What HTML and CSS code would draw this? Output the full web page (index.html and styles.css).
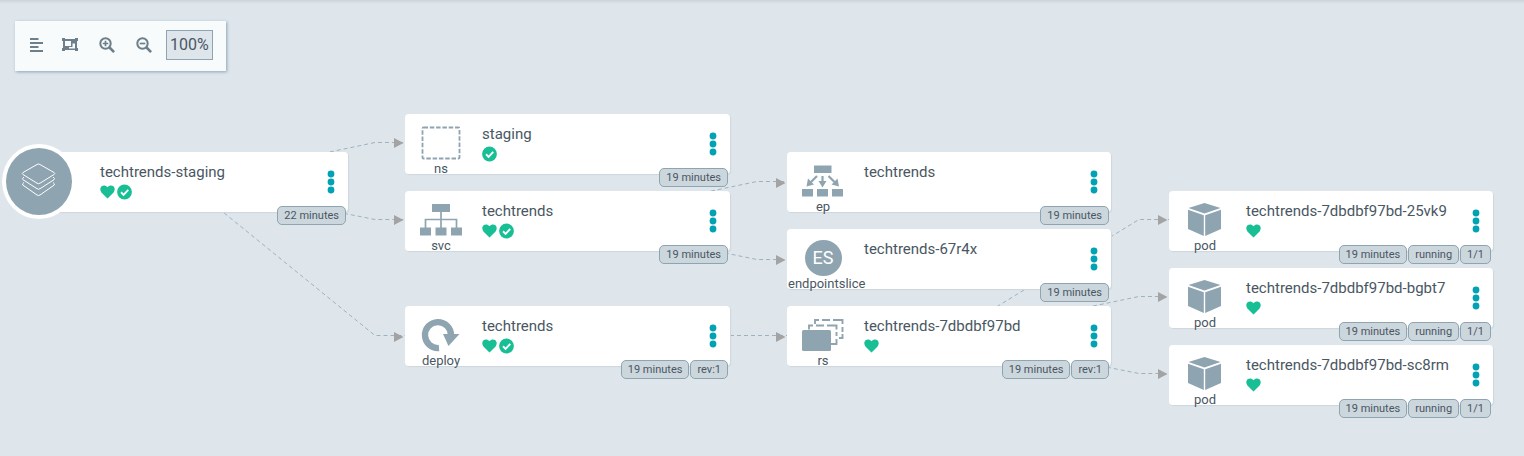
FILE: index.html
```html
<!DOCTYPE html>
<html lang="en">
<head>
<meta charset="utf-8">
<title>techtrends-staging</title>
<link rel="stylesheet" href="styles.css">
</head>
<body>
<svg class="defs" aria-hidden="true">
  <symbol id="heart" viewBox="0 0 16 16"><path d="M8 15 1.500 8.400C-.3 6.200 0 3.200 2 1.700c1.900-1.300 4.300-.8 6 1.100 1.700-1.900 4.100-2.400 6-1.100 2 1.500 2.300 4.500.5 6.700z"/></symbol>
  <symbol id="check" viewBox="0 0 16 16"><circle cx="8" cy="8" r="7.900"/><path class="tick" d="M4.300 8.300 7 11l5-5.200"/></symbol>
  <symbol id="dots" viewBox="0 0 8 24"><circle cx="4" cy="4" r="3.400"/><circle cx="4" cy="12" r="3.400"/><circle cx="4" cy="20" r="3.400"/></symbol>
  <symbol id="ns" viewBox="0 0 42 36"><rect class="line" x="2.500" y="2.500" width="37" height="31" rx="1" stroke-width="1.800" stroke-dasharray="4.500 1.800"/></symbol>
  <symbol id="svc" viewBox="0 0 42 36"><path d="M12 2h18v8H12zM0 25.500h11v8H0zM15.500 25.500h11v8h-11zM31 25.500h11v8H31z"/><path class="line" d="M21 10v16M5.500 26v-8.500h31V26" stroke-width="1.700"/></symbol>
  <symbol id="ep" viewBox="0 0 42 36"><path d="M12 2.500h17.500V10H12zM0 26h11v7.500H0zM15 26h11v7.500H15zM30 26h11v7.500H30zM4.500 23.500l1.500-8 6 6zM37 23.500l-1.500-8-6 6zM20.500 24.500 16.500 18h8z"/><path class="line" d="m15 13-6 6M26.500 13l6 6M20.500 13V20" stroke-width="2.200"/></symbol>
  <symbol id="deploy" viewBox="0 0 42 36"><path class="line" d="M19 31A13 13 0 1 1 31 18" stroke-width="6.300"/><path d="M23 17h16.500L28.500 29z"/></symbol>
  <symbol id="rs" viewBox="0 0 42 36"><rect y="13" width="29" height="21" rx="1.500"/><path class="line" d="M7 12.500V8.500h4M14 8.500h8M25 8.500h9.500v4M34.500 15v4M34.500 22v5H29M13 7V3h4M20 3h8M31 3h9.500v4M40.500 10v5M40.500 17v4H37" stroke-width="1.900"/></symbol>
  <symbol id="pod" viewBox="0 0 42 36"><path d="M20.500 1 36.500 6 20.500 11.500 4.500 6zM4 7.800l15.800 5.400V34L4 27zM37 7.800l-15.800 5.400V34L37 27z"/></symbol>
</svg>

<main class="tree">
  <svg class="edges" aria-hidden="true">
    <g class="wires">
      <path d="M186 182 375 142.500H405M186 182 375 219.500H405M186 182 375 335.500H405"/>
      <path d="M567 221 757 181.500H787M567 221 757 259.500H787M730 335.500H787"/>
      <path d="M949 336 1139 219.500H1169M949 336 1139 296.500H1169M949 336 1139 373.500H1169"/>
    </g>
    <path class="heads" d="M394 138v10l9.500-5zM394 215v10l9.500-5zM394 332v10l9.500-5zM776 178v10l9.500-5zM776 255v10l9.500-5zM776 332v10l9.500-5zM1158 215v10l9.500-5zM1158 292v10l9.500-5zM1158 369v10l9.500-5z"/>
  </svg>

  <article class="node root">
    <div class="disc"><svg viewBox="0 0 36 36"><path d="M16 2.500q1.500-1 3 0L33 10.500q1.600 1 0 2L19 21.200q-1.500 1-3 0L2 12.500q-1.600-1 0-2zM3 15q-2.600 1.700-1 2.700L16 26.700q1.500 1 3 0L33 17.700q1.600-1-1-2.700M3 20.500q-2.600 1.700-1 2.700L16 33q1.500 1 3 0L33 23.200q1.600-1-1-2.700"/></svg></div>
    <div class="info"><h2>techtrends-staging</h2><div class="status"><svg><use href="#heart"/></svg><svg><use href="#check"/></svg></div></div>
    <button class="menu" aria-label="Actions"><svg><use href="#dots"/></svg></button>
    <div class="tags"><span>22 minutes</span></div>
  </article>

  <article class="node col1 row0">
    <div class="kind"><svg><use href="#ns"/></svg><span>ns</span></div>
    <div class="info"><h2>staging</h2><div class="status"><svg><use href="#check"/></svg></div></div>
    <button class="menu" aria-label="Actions"><svg><use href="#dots"/></svg></button>
    <div class="tags"><span>19 minutes</span></div>
  </article>
  <article class="node col1 row2">
    <div class="kind"><svg><use href="#svc"/></svg><span>svc</span></div>
    <div class="info"><h2>techtrends</h2><div class="status"><svg><use href="#heart"/></svg><svg><use href="#check"/></svg></div></div>
    <button class="menu" aria-label="Actions"><svg><use href="#dots"/></svg></button>
    <div class="tags"><span>19 minutes</span></div>
  </article>
  <article class="node col1 row5">
    <div class="kind"><svg><use href="#deploy"/></svg><span>deploy</span></div>
    <div class="info"><h2>techtrends</h2><div class="status"><svg><use href="#heart"/></svg><svg><use href="#check"/></svg></div></div>
    <button class="menu" aria-label="Actions"><svg><use href="#dots"/></svg></button>
    <div class="tags"><span>19 minutes</span><span>rev:1</span></div>
  </article>

  <article class="node col2 row1">
    <div class="kind"><svg><use href="#ep"/></svg><span>ep</span></div>
    <div class="info"><h2>techtrends</h2></div>
    <button class="menu" aria-label="Actions"><svg><use href="#dots"/></svg></button>
    <div class="tags"><span>19 minutes</span></div>
  </article>
  <article class="node col2 row3">
    <div class="kind"><b class="initials">ES</b><span>endpointslice</span></div>
    <div class="info"><h2>techtrends-67r4x</h2></div>
    <button class="menu" aria-label="Actions"><svg><use href="#dots"/></svg></button>
    <div class="tags"><span>19 minutes</span></div>
  </article>
  <article class="node col2 row5">
    <div class="kind"><svg><use href="#rs"/></svg><span>rs</span></div>
    <div class="info"><h2>techtrends-7dbdbf97bd</h2><div class="status"><svg><use href="#heart"/></svg></div></div>
    <button class="menu" aria-label="Actions"><svg><use href="#dots"/></svg></button>
    <div class="tags"><span>19 minutes</span><span>rev:1</span></div>
  </article>

  <article class="node col3 row2">
    <div class="kind"><svg><use href="#pod"/></svg><span>pod</span></div>
    <div class="info"><h2>techtrends-7dbdbf97bd-25vk9</h2><div class="status"><svg><use href="#heart"/></svg></div></div>
    <button class="menu" aria-label="Actions"><svg><use href="#dots"/></svg></button>
    <div class="tags"><span>19 minutes</span><span>running</span><span>1/1</span></div>
  </article>
  <article class="node col3 row4">
    <div class="kind"><svg><use href="#pod"/></svg><span>pod</span></div>
    <div class="info"><h2>techtrends-7dbdbf97bd-bgbt7</h2><div class="status"><svg><use href="#heart"/></svg></div></div>
    <button class="menu" aria-label="Actions"><svg><use href="#dots"/></svg></button>
    <div class="tags"><span>19 minutes</span><span>running</span><span>1/1</span></div>
  </article>
  <article class="node col3 row6">
    <div class="kind"><svg><use href="#pod"/></svg><span>pod</span></div>
    <div class="info"><h2>techtrends-7dbdbf97bd-sc8rm</h2><div class="status"><svg><use href="#heart"/></svg></div></div>
    <button class="menu" aria-label="Actions"><svg><use href="#dots"/></svg></button>
    <div class="tags"><span>19 minutes</span><span>running</span><span>1/1</span></div>
  </article>

  <div class="toolbar">
    <button aria-label="Align"><svg viewBox="0 0 16 16"><path d="M1 2h8.500M1 6h13M1 10h8.500M1 14h13" stroke-width="2"/></svg></button>
    <button aria-label="Fit to screen"><svg viewBox="0 0 16 16"><path d="M0 1h3v1h10V1h3v3h-1v7h1v3h-3v-1H3v1H0v-3h1V4H0z" class="solid"/><path d="M3 4h6v5H3z" class="hole"/><path d="M10.500 6.500H13v5H7v-1.500h3.500z" class="hole"/></svg></button>
    <button aria-label="Zoom in"><svg viewBox="0 0 16 16"><circle cx="6.500" cy="6.500" r="5.200" stroke-width="2"/><path d="m10.500 10.500 4.600 4.600" stroke-width="2.600"/><path d="M3.700 6.500h5.600M6.500 3.700v5.600" stroke-width="1.700"/></svg></button>
    <button aria-label="Zoom out"><svg viewBox="0 0 16 16"><circle cx="6.500" cy="6.500" r="5.200" stroke-width="2"/><path d="m10.500 10.500 4.600 4.600" stroke-width="2.600"/><path d="M3.700 6.500h5.600" stroke-width="1.700"/></svg></button>
    <output>100%</output>
  </div>
</main>
</body>
</html>
```
FILE: styles.css
```css
* { box-sizing: border-box; }

body {
  margin: 0;
  background: #dee6ec;
  color: #495763;
  font-family: Roboto, "Liberation Sans", sans-serif;
}

button {
  padding: 0;
  border: 0;
  background: none;
  cursor: pointer;
}

svg { display: block; flex-shrink: 0; }

.defs { position: absolute; width: 0; height: 0; }

.tree {
  position: relative;
  min-height: 100vh;
  padding: 21px 15px;
  overflow: hidden;
  background: linear-gradient(#ccd4d8, #dee6ec 4px);
}

.edges {
  position: absolute;
  top: 0;
  left: 0;
  width: 100%;
  height: 100%;
}

.wires { fill: none; stroke: #9fb1bc; stroke-width: 1; stroke-dasharray: 4 3; }
.heads { fill: #a3a3a3; }

.toolbar {
  position: relative;
  display: flex;
  align-items: center;
  width: fit-content;
  height: 50px;
  padding: 0 13px 2px;
  background: #f8fbfb;
  box-shadow: 1px 1px 3px #8fa4b1;
}

.toolbar button {
  display: grid;
  place-items: center;
  width: 37px;
  height: 32px;
}

.toolbar button:first-child { width: 18px; margin-right: 5px; }
.toolbar button:nth-child(4) { margin-right: 4px; }

.toolbar svg {
  width: 16px;
  height: 16px;
  fill: none;
  stroke: #6d7f8b;
}

.toolbar .solid { fill: #6d7f8b; stroke: none; }
.toolbar .hole { fill: #f8fbfb; stroke: none; }

.toolbar output {
  padding: 0 3px;
  border: 1px solid #8fa4b1;
  background: #dee6ec;
  font-size: 16px;
  line-height: 28px;
}

.node {
  position: absolute;
  display: flex;
  width: 324px;
  height: 60px;
  border-radius: 4px;
  background: #fff;
  box-shadow: 1px 1px 1px #ccd6dd;
}

.root { left: 24px; top: 152px; }
.col1 { left: 405px; width: 325px; }
.col2 { left: 787px; }
.col3 { left: 1169px; }
.row0 { top: 114px; }
.row1 { top: 152px; }
.row2 { top: 191px; }
.row3 { top: 229px; }
.row4 { top: 268px; }
.row5 { top: 306px; }
.row6 { top: 345px; }

.disc {
  position: absolute;
  left: -22px;
  top: -8px;
  display: grid;
  place-items: center;
  width: 74px;
  height: 75px;
  border: 4px solid #fff;
  border-radius: 50%;
  background: #8fa4b1;
}

.disc svg { width: 36px; height: 36px; margin-bottom: 4px; fill: none; stroke: #fff; }

.kind {
  display: flex;
  flex-direction: column;
  align-items: safe center;
  width: 71px;
  padding: 11px 0 0 1px;
  font-size: 13px;
  line-height: 16px;
}

.kind svg { width: 42px; height: 36px; fill: #8fa4b1; }
.line { fill: none; stroke: #8fa4b1; }

.initials {
  width: 37px;
  height: 36px;
  border-radius: 50%;
  background: #8fa4b1;
  color: #fff;
  font-size: 18px;
  font-weight: 400;
  line-height: 36px;
  text-align: center;
}

.info { flex: 1; padding: 10px 0 0 6px; }
.root .info { padding-left: 76px; }

h2 {
  margin: 0;
  font-size: 15px;
  font-weight: 400;
  line-height: 20px;
  white-space: nowrap;
}

.status { display: flex; gap: 2px; padding-top: 2px; }
.status svg { width: 15px; height: 16px; fill: #18be94; }
.tick { fill: none; stroke: #fff; stroke-width: 2; }

.menu {
  display: grid;
  place-items: center;
  width: 16px;
  margin-right: 9px;
}

.menu svg { width: 8px; height: 24px; fill: #00a2b3; }

.tags {
  position: absolute;
  right: 2px;
  top: 54px;
  display: flex;
  gap: 1px;
}

.tags span {
  padding: 0 6px;
  border: 1px solid #8fa4b1;
  border-radius: 5px;
  background: #ccd6dd;
  font-size: 11px;
  line-height: 17px;
  white-space: nowrap;
}
```
